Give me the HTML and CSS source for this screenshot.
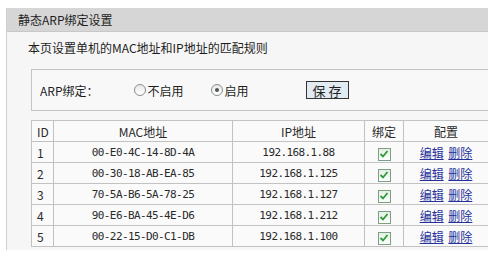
FILE: index.html
```html
<!DOCTYPE html>
<html>
<head>
    <title>静态ARP绑定设置</title>
    <meta charset="utf-8">
    <link rel="stylesheet" href="styles.css">
</head>
<body>
    <div class="panel">
        <div class="title">静态ARP绑定设置</div>
        <p class="desc">本页设置单机的MAC地址和IP地址的匹配规则</p>

        <div class="bindbox">
            <span class="label">ARP绑定：</span>
            <span class="radio"></span><span class="opt">不启用</span>
            <span class="radio on"></span><span class="opt">启用</span>
            <button class="save" type="button">保 存</button>
        </div>

        <table class="arp">
            <tr>
                <th class="id">ID</th>
                <th class="mac">MAC地址</th>
                <th class="ip">IP地址</th>
                <th class="bind">绑定</th>
                <th class="cfg">配置</th>
            </tr>
            <tr>
                <td class="id">1</td>
                <td class="mono">00-E0-4C-14-8D-4A</td>
                <td class="mono">192.168.1.88</td>
                <td class="bind"><span class="chk"><svg width="10" height="10" viewBox="0 0 10 10"><path d="M1.5 5 L4 7.5 L8.5 2" fill="none" stroke="#2f9a3a" stroke-width="1.8"/></svg></span></td>
                <td class="cfg"><a href="#">编辑</a> <a href="#">删除</a></td>
            </tr>
            <tr>
                <td class="id">2</td>
                <td class="mono">00-30-18-AB-EA-85</td>
                <td class="mono">192.168.1.125</td>
                <td class="bind"><span class="chk"><svg width="10" height="10" viewBox="0 0 10 10"><path d="M1.5 5 L4 7.5 L8.5 2" fill="none" stroke="#2f9a3a" stroke-width="1.8"/></svg></span></td>
                <td class="cfg"><a href="#">编辑</a> <a href="#">删除</a></td>
            </tr>
            <tr>
                <td class="id">3</td>
                <td class="mono">70-5A-B6-5A-78-25</td>
                <td class="mono">192.168.1.127</td>
                <td class="bind"><span class="chk"><svg width="10" height="10" viewBox="0 0 10 10"><path d="M1.5 5 L4 7.5 L8.5 2" fill="none" stroke="#2f9a3a" stroke-width="1.8"/></svg></span></td>
                <td class="cfg"><a href="#">编辑</a> <a href="#">删除</a></td>
            </tr>
            <tr>
                <td class="id">4</td>
                <td class="mono">90-E6-BA-45-4E-D6</td>
                <td class="mono">192.168.1.212</td>
                <td class="bind"><span class="chk"><svg width="10" height="10" viewBox="0 0 10 10"><path d="M1.5 5 L4 7.5 L8.5 2" fill="none" stroke="#2f9a3a" stroke-width="1.8"/></svg></span></td>
                <td class="cfg"><a href="#">编辑</a> <a href="#">删除</a></td>
            </tr>
            <tr>
                <td class="id">5</td>
                <td class="mono">00-22-15-D0-C1-DB</td>
                <td class="mono">192.168.1.100</td>
                <td class="bind"><span class="chk"><svg width="10" height="10" viewBox="0 0 10 10"><path d="M1.5 5 L4 7.5 L8.5 2" fill="none" stroke="#2f9a3a" stroke-width="1.8"/></svg></span></td>
                <td class="cfg"><a href="#">编辑</a> <a href="#">删除</a></td>
            </tr>
        </table>
    </div>
</body>
</html>
```

FILE: styles.css
```css
body{
  margin: 0;
  padding: 8px 8px 0 6px;
  background: #fff;
  font-family: "Noto Sans CJK SC", "Liberation Sans", sans-serif;
  font-size: 12px;
  color: #1e1e1e;
}
.panel{
  width: 481px;
  height: 242px;
  border-left: 1px solid #d0d0d0;
  background: #f6f6f6;
}
.title{
  height: 23px;
  line-height: 23px;
  padding-left: 11px;
  background: #d6d6d6;
  border-bottom: 1px solid #c8c8c8;
}
.desc{
  margin: 0;
  padding: 8px 0 0 21px;
  line-height: 16px;
}
.bindbox{
  display: flex;
  align-items: center;
  height: 40px;
  margin: 13px 0 0 24px;
  border: 1px solid #c4c4c4;
  border-right: none;
  background: #f8f8f8;
}
.label{
  margin-left: 8px;
  margin-right: 35px;
}
.radio{
  box-sizing: border-box;
  width: 12px;
  height: 12px;
  border: 1px solid #8c8c8c;
  border-radius: 50%;
  background: linear-gradient(#e8e8e8, #fff);
  display: flex;
  align-items: center;
  justify-content: center;
  margin-right: 2px;
}
.radio.on::after{
  content: "";
  width: 4px;
  height: 4px;
  border-radius: 50%;
  background: #4c5a4c;
}
.opt{
  margin-right: 27px;
}
.save{
  margin-left: 30px;
  height: 18px;
  width: 43px;
  padding: 0;
  border: 1px solid #333;
  background: #e2ebf1;
  font-family: "Noto Sans CJK SC", sans-serif;
  font-size: 13px;
  line-height: 15px;
  color: #222;
}
.arp{
  margin: 9px 0 0 24px;
  width: 457px;
  border-collapse: collapse;
  table-layout: fixed;
  background: #fafafa;
}
.arp th, .arp td{
  border: 1px solid #c2c2c2;
  height: 20px;
  padding: 0;
  text-align: center;
  font-weight: normal;
  color: #2a2a2a;
}
.arp .id{
  width: 22px;
  text-align: left;
  padding-left: 5px;
  box-sizing: border-box;
}
.arp .mac{ width: 178px; }
.arp .ip{ width: 131px; }
.arp .bind{ width: 38px; }
.arp .cfg{ border-right: none; }
.mono{
  font-family: "DejaVu Sans Mono", monospace;
  font-size: 11px;
  letter-spacing: -0.6px;
}
.chk{
  display: inline-flex;
  align-items: center;
  justify-content: center;
  box-sizing: border-box;
  width: 13px;
  height: 13px;
  border: 1px solid #7f9c85;
  background: linear-gradient(#e4f0e4, #fbfffb);
  vertical-align: middle;
}
.cfg a{
  color: #26309a;
  text-decoration: underline;
  margin: 0 1px;
}
```
